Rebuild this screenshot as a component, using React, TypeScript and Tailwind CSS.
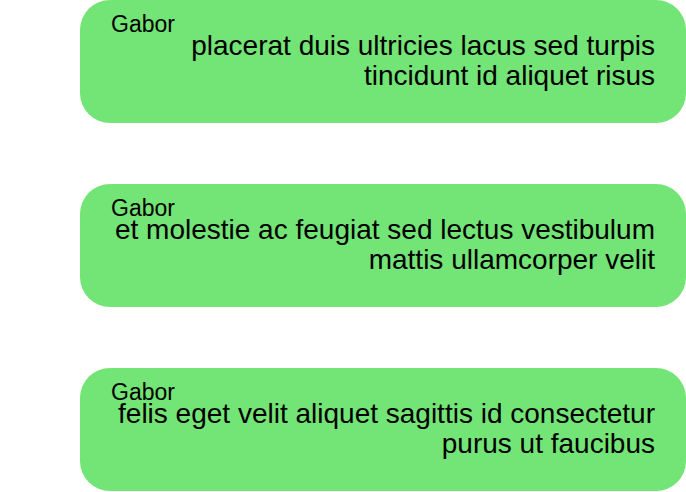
const messages = [
  "placerat duis ultricies lacus sed turpis tincidunt id aliquet risus",
  "et molestie ac feugiat sed lectus vestibulum mattis ullamcorper velit",
  "felis eget velit aliquet sagittis id consectetur purus ut faucibus",
];

export default function App() {
  return (
    <div className="flex flex-col gap-[61px] pl-20 font-['Liberation_Sans',Arial,sans-serif] text-black">
      {messages.map((text, i) => (
        <div key={i} className="h-[123px] rounded-[30px] bg-[#73e476] px-[31px] pt-[18px]">
          <div className="text-[23px] leading-[13px]">Gabor</div>
          <p className="text-right text-[28px] leading-[30px]">{text}</p>
        </div>
      ))}
    </div>
  );
}
